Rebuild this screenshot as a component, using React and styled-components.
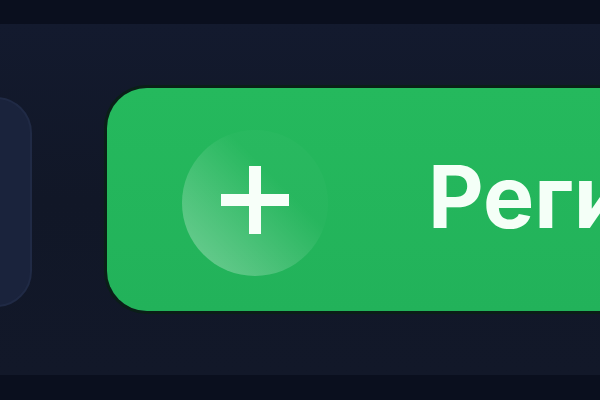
import styled, { createGlobalStyle } from 'styled-components';

const GlobalStyle = createGlobalStyle`
  html, body {
    margin: 0;
    padding: 0;
    overflow: hidden;
    background-color: #0a0f1e;
    font-family: Inter, "Noto Sans", sans-serif;
  }
`;

const Page = styled.div`
  width: 600px;
  height: 400px;
  overflow: hidden;
  padding-top: 24px;
  box-sizing: border-box;
`;

const Bar = styled.section`
  height: 351px;
  background: linear-gradient(180deg, #131a2e 0%, #111727 50%, #121829 100%);
  display: flex;
  align-items: center;
  gap: 75px;
`;

const GhostButton = styled.div`
  flex: none;
  width: 120px;
  height: 210px;
  margin-left: -88px;
  margin-top: 4px;
  border-radius: 36px;
  background-color: #1a233c;
  border: 2px solid #202a45;
  box-sizing: border-box;
`;

const RegisterButton = styled.button`
  flex: none;
  width: 900px;
  height: 223px;
  border: none;
  border-radius: 40px;
  background: linear-gradient(180deg, #25b95d 0%, #22b25a 100%);
  box-shadow: 0 0 0 3px #0a1f17;
  display: flex;
  align-items: center;
  gap: 100px;
  padding: 0 0 0 75px;
  cursor: pointer;
`;

const IconCircle = styled.span`
  flex: none;
  width: 146px;
  height: 146px;
  margin-top: 6px;
  border-radius: 50%;
  background: linear-gradient(to bottom left, rgba(255, 255, 255, 0.02) 35%, rgba(255, 255, 255, 0.36) 100%);
  display: flex;
  align-items: center;
  justify-content: center;
  svg {
    margin-top: -6px;
  }
`;

const Label = styled.span`
  color: #f4fff7;
  font-family: Inter, "Noto Sans", sans-serif;
  font-weight: 700;
  font-size: 86px;
  line-height: 1;
  white-space: nowrap;
  margin-top: -6px;
`;

const PlusIcon = () => (
  <svg width="68" height="68" viewBox="0 0 68 68">
    <path d="M34 0 V68 M0 34 H68" stroke="#f7fff9" strokeWidth="12" fill="none" />
  </svg>
);

const App = () => {
  return (
    <>
      <GlobalStyle />
      <Page>
        <Bar>
          <GhostButton />
          <RegisterButton>
            <IconCircle>
              <PlusIcon />
            </IconCircle>
            <Label>Регистрация</Label>
          </RegisterButton>
        </Bar>
      </Page>
    </>
  );
};

export default App;
